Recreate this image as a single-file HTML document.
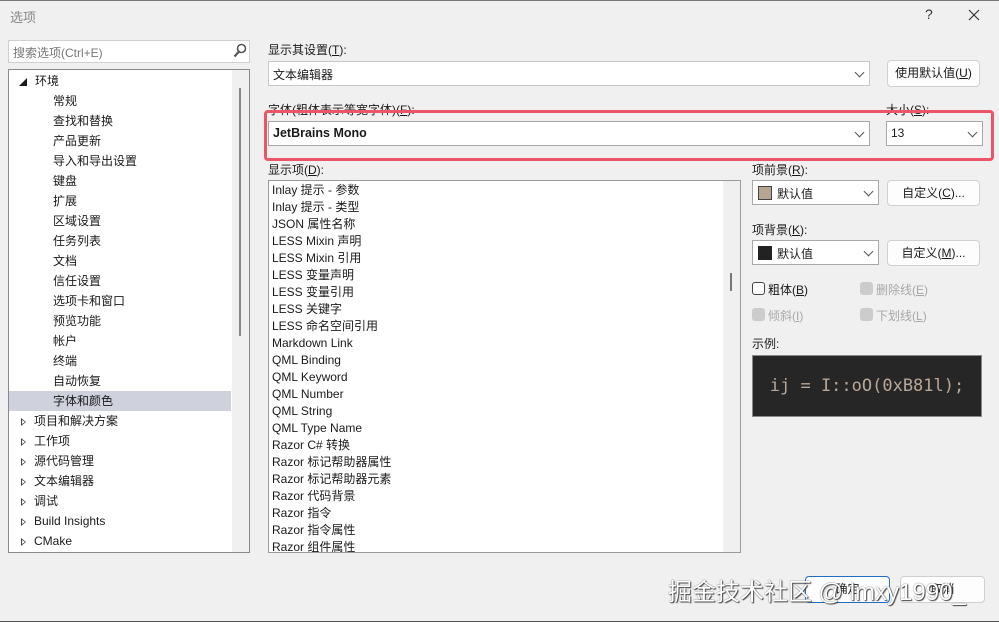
<!DOCTYPE html>
<html><head><meta charset="utf-8">
<style>
*{box-sizing:border-box;margin:0;padding:0}
body{width:999px;height:622px;background:#f0f0f0;font-family:"Liberation Sans","Noto Sans CJK SC",sans-serif;font-size:12px;color:#1a1a1a;position:relative;overflow:hidden}
.a{position:absolute}
.box{position:absolute;background:#fff;border:1px solid #b8b8b8}
.btn{position:absolute;background:#fdfdfd;border:1px solid #d0d0d0;border-radius:4px;text-align:center;line-height:25px}
.chev{position:absolute;right:6px;top:7px;width:7px;height:7px;border-right:1px solid #555;border-bottom:1px solid #555;transform:rotate(45deg)}
.tree div{height:20px;line-height:20px;white-space:nowrap}
.list div{height:17px;line-height:17px;white-space:nowrap}
.tri{display:inline-block;width:0;height:0;border-left:5px solid #444;border-top:4px solid transparent;border-bottom:4px solid transparent;margin:0 8px 0 12px;vertical-align:middle;position:relative}
.tri:after{content:"";position:absolute;left:-4px;top:-2px;border-left:3px solid #fff;border-top:2px solid transparent;border-bottom:2px solid transparent}
.cb{position:absolute;width:13px;height:13px;border-radius:3px}
.gray{color:#a8a8a8}
</style></head><body>
<div class="a" style="left:0;top:0;width:999px;height:1px;background:#777"></div>
<div class="a" style="left:10px;top:7px;font-size:13px;color:#888">选项</div>
<div class="a" style="left:925px;top:6px;font-size:14px;color:#333">?</div>
<svg class="a" style="left:968px;top:9px" width="12" height="12"><path d="M1 1L11 11M11 1L1 11" stroke="#333" stroke-width="1.2"/></svg>

<div class="box" style="left:8px;top:40px;width:242px;height:23px;border-color:#d0d0d0"></div>
<div class="a" style="left:13px;top:44px;color:#777;font-size:12px">搜索选项(Ctrl+E)</div>
<svg class="a" style="left:233px;top:43px" width="14" height="16"><circle cx="8.5" cy="5.5" r="4" fill="none" stroke="#555" stroke-width="1.6"/><line x1="6" y1="8.5" x2="1.5" y2="13.5" stroke="#555" stroke-width="2.2"/></svg>

<div class="box" style="left:8px;top:69px;width:242px;height:484px;border-color:#8a8a8a"></div>
<div class="a" style="left:232px;top:70px;width:17px;height:482px;background:#f0f0f0"></div>
<div class="a" style="left:239px;top:88px;width:2px;height:248px;background:#888"></div>
<div class="a" style="left:9px;top:391px;width:222px;height:20px;background:#cfd1dd"></div>
<div class="a tree" style="left:9px;top:71px;width:222px">
<div><span style="display:inline-block;margin:0 8px 0 10px;font-size:8px">◢</span>环境</div>
<div style="padding-left:44px">常规</div>
<div style="padding-left:44px">查找和替换</div>
<div style="padding-left:44px">产品更新</div>
<div style="padding-left:44px">导入和导出设置</div>
<div style="padding-left:44px">键盘</div>
<div style="padding-left:44px">扩展</div>
<div style="padding-left:44px">区域设置</div>
<div style="padding-left:44px">任务列表</div>
<div style="padding-left:44px">文档</div>
<div style="padding-left:44px">信任设置</div>
<div style="padding-left:44px">选项卡和窗口</div>
<div style="padding-left:44px">预览功能</div>
<div style="padding-left:44px">帐户</div>
<div style="padding-left:44px">终端</div>
<div style="padding-left:44px">自动恢复</div>
<div style="padding-left:44px">字体和颜色</div>
<div><span class="tri"></span>项目和解决方案</div>
<div><span class="tri"></span>工作项</div>
<div><span class="tri"></span>源代码管理</div>
<div><span class="tri"></span>文本编辑器</div>
<div><span class="tri"></span>调试</div>
<div><span class="tri"></span>Build Insights</div>
<div><span class="tri"></span>CMake</div>
</div>

<div class="a" style="left:268px;top:41px">显示其设置(<u>T</u>):</div>
<div class="box" style="left:268px;top:61px;width:602px;height:25px;border-color:#c8c8c8"><span class="a" style="left:4px;top:4px">文本编辑器</span><span class="chev"></span></div>
<div class="btn" style="left:887px;top:60px;width:93px;height:27px">使用默认值(<u>U</u>)</div>

<div class="a" style="left:268px;top:101px">字体(粗体表示等宽字体)(<u>F</u>):</div>
<div class="a" style="left:886px;top:101px">大小(<u>S</u>):</div>
<div class="box" style="left:268px;top:121px;width:602px;height:25px;border-color:#a8a8a8"><span class="a" style="left:4px;top:4px;font-weight:bold;font-size:12.5px">JetBrains Mono</span><span class="chev"></span></div>
<div class="box" style="left:886px;top:121px;width:97px;height:25px;border-color:#a8a8a8"><span class="a" style="left:4px;top:4px">13</span><span class="chev"></span></div>
<div class="a" style="left:264px;top:110px;width:730px;height:51px;border:3px solid #ec5467;border-radius:4px"></div>

<div class="a" style="left:268px;top:161px">显示项(<u>D</u>):</div>
<div class="box" style="left:268px;top:180px;width:473px;height:373px;border-color:#9a9a9a"></div>
<div class="a" style="left:723px;top:181px;width:17px;height:371px;background:#f0f0f0"></div>
<div class="a" style="left:730px;top:273px;width:2px;height:18px;background:#777"></div>
<div class="a list" style="left:272px;top:182px;height:370px;overflow:hidden">
<div>Inlay 提示 - 参数</div><div>Inlay 提示 - 类型</div><div>JSON 属性名称</div><div>LESS Mixin 声明</div><div>LESS Mixin 引用</div><div>LESS 变量声明</div><div>LESS 变量引用</div><div>LESS 关键字</div><div>LESS 命名空间引用</div><div>Markdown Link</div><div>QML Binding</div><div>QML Keyword</div><div>QML Number</div><div>QML String</div><div>QML Type Name</div><div>Razor C# 转换</div><div>Razor 标记帮助器属性</div><div>Razor 标记帮助器元素</div><div>Razor 代码背景</div><div>Razor 指令</div><div>Razor 指令属性</div><div>Razor 组件属性</div>
</div>

<div class="a" style="left:752px;top:161px">项前景(<u>R</u>):</div>
<div class="box" style="left:752px;top:180px;width:127px;height:25px;border-color:#a8a8a8"><span class="a" style="left:5px;top:5px;width:14px;height:14px;background:#b5a591;border:1px solid #444"></span><span class="a" style="left:24px;top:4px">默认值</span><span class="chev"></span></div>
<div class="btn" style="left:887px;top:180px;width:93px;height:26px">自定义(<u>C</u>)...</div>
<div class="a" style="left:752px;top:221px">项背景(<u>K</u>):</div>
<div class="box" style="left:752px;top:240px;width:127px;height:25px;border-color:#a8a8a8"><span class="a" style="left:5px;top:5px;width:14px;height:14px;background:#222;border:1px solid #222"></span><span class="a" style="left:24px;top:4px">默认值</span><span class="chev"></span></div>
<div class="btn" style="left:887px;top:240px;width:93px;height:26px">自定义(<u>M</u>)...</div>
<div class="cb" style="left:752px;top:282px;border:1px solid #444;background:#fff"></div>
<div class="a" style="left:768px;top:281px">粗体(<u>B</u>)</div>
<div class="cb" style="left:860px;top:282px;background:#ccc"></div><div class="a gray" style="left:876px;top:281px">删除线(<u>E</u>)</div>
<div class="cb" style="left:752px;top:308px;background:#ccc"></div><div class="a gray" style="left:768px;top:307px">倾斜(<u>I</u>)</div>
<div class="cb" style="left:860px;top:308px;background:#ccc"></div><div class="a gray" style="left:876px;top:307px">下划线(<u>L</u>)</div>
<div class="a" style="left:752px;top:335px">示例:</div>
<div class="a" style="left:752px;top:355px;width:230px;height:62px;background:#262626;border:1px solid #888;color:#b8a898;font-family:'DejaVu Sans Mono','Liberation Mono',monospace;font-size:17px;text-align:center;line-height:60px">ij = I::oO(0xB81l);</div>

<div class="btn" style="left:805px;top:576px;width:85px;height:27px;border:1px solid #1e6fc0">确定</div>
<div class="btn" style="left:900px;top:576px;width:85px;height:27px">取消</div>
<div class="a" style="left:668px;top:572px;font-size:24px;color:#fff;text-shadow:0 0 1px #333,1px 1px 1px #444;white-space:nowrap">掘金技术社区 @ lmxy1990_</div>
<div class="a" style="left:0;top:621px;width:999px;height:1px;background:#555"></div>
</body></html>
